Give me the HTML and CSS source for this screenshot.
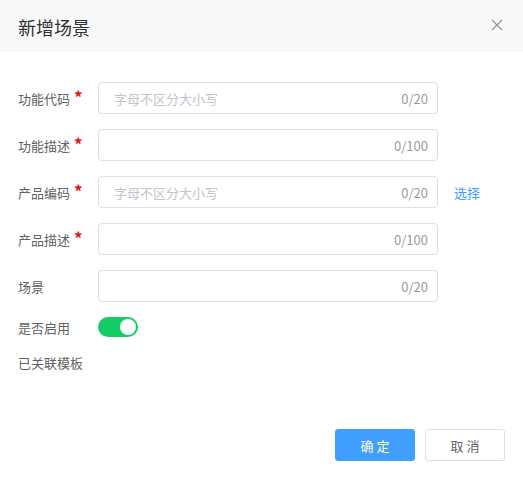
FILE: index.html
```html
<!DOCTYPE html>
<html lang="zh-CN">
<head>
<meta charset="utf-8">
<link rel="stylesheet" href="styles.css">
</head>
<body>
<div class="dialog">
  <div class="header">
    <span class="title">新增场景</span>
    <svg class="close" width="12" height="12" viewBox="0 0 12 12"><path d="M1 1L11 11M11 1L1 11" stroke="#909399" stroke-width="1.2" fill="none"/></svg>
  </div>
  <div class="body">
    <div class="row">
      <label class="label">功能代码<span class="req">*</span></label>
      <div class="input"><span class="ph">字母不区分大小写</span><span class="count">0/20</span></div>
    </div>
    <div class="row">
      <label class="label">功能描述<span class="req">*</span></label>
      <div class="input"><span class="ph"></span><span class="count">0/100</span></div>
    </div>
    <div class="row">
      <label class="label">产品编码<span class="req">*</span></label>
      <div class="input"><span class="ph">字母不区分大小写</span><span class="count">0/20</span></div>
      <a class="link">选择</a>
    </div>
    <div class="row">
      <label class="label">产品描述<span class="req">*</span></label>
      <div class="input"><span class="ph"></span><span class="count">0/100</span></div>
    </div>
    <div class="row">
      <label class="label">场景</label>
      <div class="input"><span class="ph"></span><span class="count">0/20</span></div>
    </div>
    <div class="row row-switch">
      <label class="label">是否启用</label>
      <div class="switch"><span class="knob"></span></div>
    </div>
    <div class="row row-text">
      <label class="label">已关联模板</label>
    </div>
  </div>
  <div class="footer">
    <button class="btn primary">确 定</button>
    <button class="btn">取 消</button>
  </div>
</div>
</body>
</html>
```
FILE: styles.css
```css
* { box-sizing: border-box; }
html, body { margin: 0; padding: 0; background: #fff; }
body {
  font-family: "Noto Sans CJK SC", "Microsoft YaHei", "Noto Sans", sans-serif;
  width: 523px;
  height: 478px;
  overflow: hidden;
}
.dialog { width: 523px; }
.header {
  height: 52px;
  background: #f8f8f8;
  display: flex;
  align-items: center;
  justify-content: space-between;
  padding: 0 20px 0 18px;
}
.title {
  font-size: 18px;
  color: #303133;
  line-height: 24px;
  margin-top: 2px;
}
.close { display: block; margin-top: -2px; }
.body { padding: 30px 18px 0 18px; }
.row {
  display: flex;
  align-items: center;
  margin-bottom: 15px;
  height: 32px;
}
.label {
  width: 80px;
  font-size: 13px;
  color: #606266;
  flex: none;
  display: flex;
  align-items: center;
}
.req {
  color: #e0161c;
  margin-left: 4px;
  font-size: 17px;
  font-weight: bold;
  line-height: 1;
  position: relative;
  top: -2px;
}
.input {
  width: 340px;
  height: 32px;
  border: 1px solid #dcdfe6;
  border-radius: 4px;
  display: flex;
  align-items: center;
  justify-content: space-between;
  padding: 0 9px 0 15px;
  font-size: 13px;
}
.ph { color: #c0c4cc; }
.count { color: #999ba0; font-size: 13px; }
.link { color: #409eff; font-size: 13px; margin-left: 16px; }
.row-switch { height: 20px; margin-bottom: 15px; margin-top: 0; }
.switch {
  width: 40px;
  height: 20px;
  border-radius: 10px;
  background: #13ce66;
  position: relative;
}
.knob {
  position: absolute;
  top: 2px;
  right: 2px;
  width: 16px;
  height: 16px;
  border-radius: 50%;
  background: #fff;
}
.row-text { height: 20px; }
.footer {
  display: flex;
  justify-content: flex-end;
  gap: 10px;
  padding: 42px 18px 0 0;
}
.btn {
  width: 80px;
  height: 32px;
  border: 1px solid #dcdfe6;
  border-radius: 3px;
  background: #fff;
  color: #606266;
  font-family: inherit;
  font-size: 13px;
  padding: 0;
}
.btn.primary {
  background: #409eff;
  border-color: #409eff;
  color: #fff;
}
```
